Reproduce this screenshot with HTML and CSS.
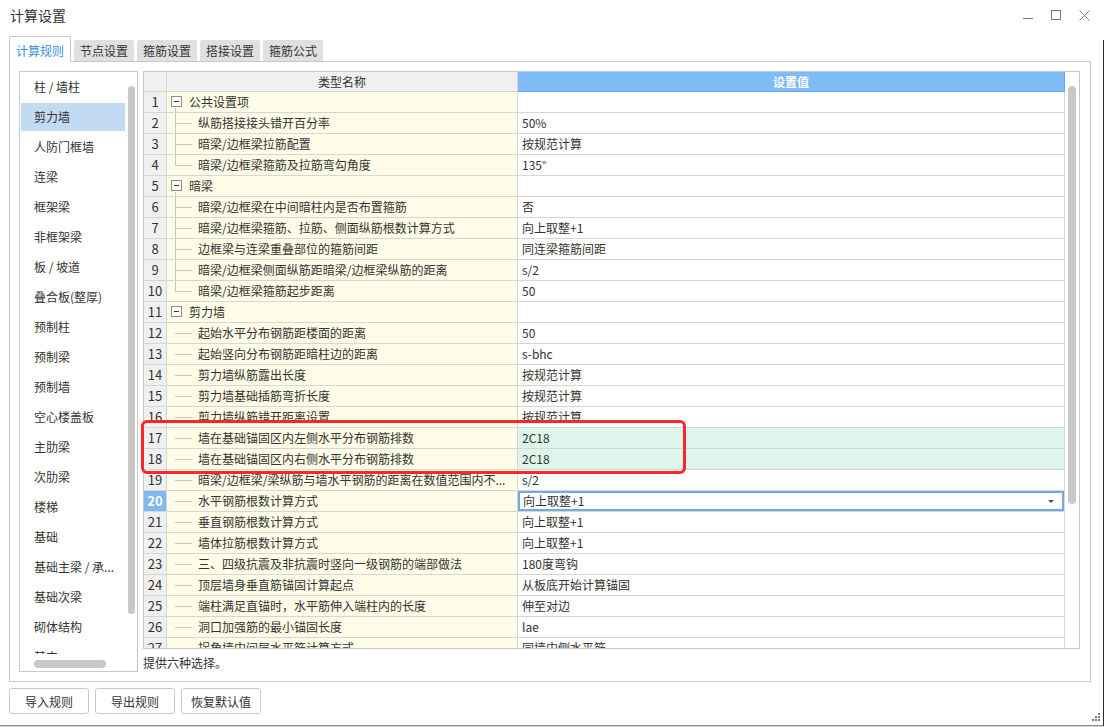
FILE: index.html
```html
<!DOCTYPE html>
<html lang="zh-CN">
<head>
<meta charset="utf-8">
<title>计算设置</title>
<link rel="stylesheet" href="styles.css">
</head>
<body>
<div class="window">
  <div class="titlebar">
    <span class="title">计算设置</span>
    <div class="controls">
      <span class="ctl"><svg width="10" height="10" viewBox="0 0 10 10"><path d="M0 8.5H10" stroke="#7a7a7a" stroke-width="1"/></svg></span>
      <span class="ctl"><svg width="10" height="10" viewBox="0 0 10 10"><rect x="0.5" y="0.5" width="9" height="9" fill="none" stroke="#7a7a7a" stroke-width="1"/></svg></span>
      <span class="ctl"><svg width="11" height="11" viewBox="0 0 11 11"><path d="M0.5 0.5L10.5 10.5M10.5 0.5L0.5 10.5" stroke="#8a8a8a" stroke-width="1"/></svg></span>
    </div>
  </div>

  <div class="tabs">
    <div class="tab active">计算规则</div>
    <div class="tab">节点设置</div>
    <div class="tab">箍筋设置</div>
    <div class="tab">搭接设置</div>
    <div class="tab">箍筋公式</div>
  </div>

  <div class="panel">
    <div class="sidebar">
      <ul class="list">
        <li>柱 / 墙柱</li>
        <li class="sel">剪力墙</li>
        <li>人防门框墙</li>
        <li>连梁</li>
        <li>框架梁</li>
        <li>非框架梁</li>
        <li>板 / 坡道</li>
        <li>叠合板(整厚)</li>
        <li>预制柱</li>
        <li>预制梁</li>
        <li>预制墙</li>
        <li>空心楼盖板</li>
        <li>主肋梁</li>
        <li>次肋梁</li>
        <li>楼梯</li>
        <li>基础</li>
        <li>基础主梁 / 承...</li>
        <li>基础次梁</li>
        <li>砌体结构</li>
        <li>其它</li>
      </ul>
      <div class="vthumb"></div>
      <div class="hthumb"></div>
    </div>

    <div class="main">
      <div class="grid">
        <div class="table">
          <div class="row head">
            <div class="num"></div>
            <div class="name">类型名称</div>
            <div class="val">设置值</div>
          </div>
          <div class="row"><div class="num">1</div><div class="name group"><span class="box"></span>公共设置项</div><div class="val"></div></div>
          <div class="row"><div class="num">2</div><div class="name child tee">纵筋搭接接头错开百分率</div><div class="val">50%</div></div>
          <div class="row"><div class="num">3</div><div class="name child tee">暗梁/边框梁拉筋配置</div><div class="val">按规范计算</div></div>
          <div class="row"><div class="num">4</div><div class="name child last">暗梁/边框梁箍筋及拉筋弯勾角度</div><div class="val">135°</div></div>
          <div class="row"><div class="num">5</div><div class="name group"><span class="box"></span>暗梁</div><div class="val"></div></div>
          <div class="row"><div class="num">6</div><div class="name child tee">暗梁/边框梁在中间暗柱内是否布置箍筋</div><div class="val">否</div></div>
          <div class="row"><div class="num">7</div><div class="name child tee">暗梁/边框梁箍筋、拉筋、侧面纵筋根数计算方式</div><div class="val">向上取整+1</div></div>
          <div class="row"><div class="num">8</div><div class="name child tee">边框梁与连梁重叠部位的箍筋间距</div><div class="val">同连梁箍筋间距</div></div>
          <div class="row"><div class="num">9</div><div class="name child tee">暗梁/边框梁侧面纵筋距暗梁/边框梁纵筋的距离</div><div class="val">s/2</div></div>
          <div class="row"><div class="num">10</div><div class="name child last">暗梁/边框梁箍筋起步距离</div><div class="val">50</div></div>
          <div class="row"><div class="num">11</div><div class="name group open"><span class="box"></span>剪力墙</div><div class="val"></div></div>
          <div class="row"><div class="num">12</div><div class="name child">起始水平分布钢筋距楼面的距离</div><div class="val">50</div></div>
          <div class="row"><div class="num">13</div><div class="name child">起始竖向分布钢筋距暗柱边的距离</div><div class="val">s-bhc</div></div>
          <div class="row"><div class="num">14</div><div class="name child">剪力墙纵筋露出长度</div><div class="val">按规范计算</div></div>
          <div class="row"><div class="num">15</div><div class="name child">剪力墙基础插筋弯折长度</div><div class="val">按规范计算</div></div>
          <div class="row"><div class="num">16</div><div class="name child">剪力墙纵筋错开距离设置</div><div class="val">按规范计算</div></div>
          <div class="row"><div class="num">17</div><div class="name child">墙在基础锚固区内左侧水平分布钢筋排数</div><div class="val mint">2C18</div></div>
          <div class="row"><div class="num">18</div><div class="name child">墙在基础锚固区内右侧水平分布钢筋排数</div><div class="val mint">2C18</div></div>
          <div class="row"><div class="num">19</div><div class="name child">暗梁/边框梁/梁纵筋与墙水平钢筋的距离在数值范围内不...</div><div class="val">s/2</div></div>
          <div class="row current"><div class="num">20</div><div class="name child">水平钢筋根数计算方式</div><div class="val edit">向上取整+1<span class="caret"></span></div></div>
          <div class="row"><div class="num">21</div><div class="name child">垂直钢筋根数计算方式</div><div class="val">向上取整+1</div></div>
          <div class="row"><div class="num">22</div><div class="name child">墙体拉筋根数计算方式</div><div class="val">向上取整+1</div></div>
          <div class="row"><div class="num">23</div><div class="name child">三、四级抗震及非抗震时竖向一级钢筋的端部做法</div><div class="val">180度弯钩</div></div>
          <div class="row"><div class="num">24</div><div class="name child">顶层墙身垂直筋锚固计算起点</div><div class="val">从板底开始计算锚固</div></div>
          <div class="row"><div class="num">25</div><div class="name child">端柱满足直锚时，水平筋伸入端柱内的长度</div><div class="val">伸至对边</div></div>
          <div class="row"><div class="num">26</div><div class="name child">洞口加强筋的最小锚固长度</div><div class="val">lae</div></div>
          <div class="row"><div class="num">27</div><div class="name child">拐角墙中间层水平筋计算方式</div><div class="val">同墙中侧水平筋</div></div>
        </div>
        <div class="vscroll"><div class="thumb"></div></div>
      </div>
      <div class="hint">提供六种选择。</div>
    </div>
  </div>

  <div class="buttons">
    <button class="btn">导入规则</button>
    <button class="btn">导出规则</button>
    <button class="btn">恢复默认值</button>
  </div>

  <svg class="grip" width="8" height="8" viewBox="0 0 8 8">
    <rect x="6" y="0" width="2" height="2" fill="#7a7a7a"/>
    <rect x="3" y="3" width="2" height="2" fill="#7a7a7a"/>
    <rect x="6" y="3" width="2" height="2" fill="#7a7a7a"/>
    <rect x="0" y="6" width="2" height="2" fill="#7a7a7a"/>
    <rect x="3" y="6" width="2" height="2" fill="#7a7a7a"/>
    <rect x="6" y="6" width="2" height="2" fill="#7a7a7a"/>
  </svg>

  <div class="annot"></div>
</div>
</body>
</html>
```

FILE: styles.css
```css
* { box-sizing: border-box; }
html, body { margin: 0; padding: 0; }
body {
  width: 1104px;
  height: 727px;
  overflow: hidden;
  background: #d6d6d6;
  font-family: "Noto Sans CJK SC", "Microsoft YaHei", sans-serif;
  font-size: 12px;
  color: #333;
}
.window {
  position: relative;
  width: 1104px;
  height: 726px;
  background: #fff;
  border-bottom: 1px solid #8c8c8c;
}
.window::before {
  content: "";
  position: absolute;
  right: 0;
  top: 40px;
  bottom: -1px;
  width: 1px;
  background: #2a2a2a;
}

/* title bar */
.titlebar {
  height: 30px;
  display: flex;
  align-items: center;
  padding-left: 10px;
}
.title { font-size: 14px; line-height: 20px; color: #333; }
.controls { margin-left: auto; display: flex; padding-right: 6px; }
.ctl {
  width: 28px;
  height: 30px;
  display: flex;
  align-items: center;
  justify-content: center;
}

/* tabs */
.tabs {
  margin-top: 6px;
  height: 25px;
  padding-left: 9px;
  display: flex;
  align-items: flex-end;
  gap: 3px;
}
.tab {
  width: 60px;
  height: 21px;
  line-height: 21px;
  text-align: center;
  background: #e0e0e0;
  border-radius: 2px 2px 0 0;
  color: #333;
}
.tab.active {
  position: relative;
  z-index: 2;
  width: 62px;
  height: 26px;
  margin-bottom: -1px;
  padding-top: 3px;
  line-height: 22px;
  background: #fff;
  border: 1px solid #c8c8c8;
  border-bottom: none;
  color: #3a8de6;
}

/* panel */
.panel {
  margin-left: 9px;
  width: 1082px;
  height: 621px;
  border: 1px solid #c9c9c9;
  padding: 9px 10px 0 9px;
  display: flex;
  gap: 5px;
}

/* sidebar */
.sidebar {
  position: relative;
  width: 120px;
  height: 601px;
  border: 1px solid #c9c9c9;
  background: #fff;
}
.list {
  list-style: none;
  margin: 0;
  padding: 1px 0 0 1px;
  height: 582px;
  overflow: hidden;
}
.list li {
  width: 104px;
  height: 28px;
  line-height: 28px;
  margin-bottom: 2px;
  padding-left: 13px;
  white-space: nowrap;
  overflow: hidden;
}
.list li.sel { background: #c3dbf2; }
.vthumb {
  position: absolute;
  left: 108px;
  top: 14px;
  width: 7px;
  height: 528px;
  border-radius: 4px;
  background: #c8c8c8;
}
.hthumb {
  position: absolute;
  left: 14px;
  top: 588px;
  width: 72px;
  height: 8px;
  border-radius: 4px;
  background: #c8c8c8;
}

/* main */
.main { width: 937px; display: flex; flex-direction: column; }
.grid {
  width: 937px;
  height: 578px;
  border: 1px solid #c8c8c8;
  display: flex;
  overflow: hidden;
}
.table { width: 921px; flex: none; }
.row { display: flex; height: 21px; }
.row > div {
  height: 21px;
  border-right: 1px solid #d6d6d6;
  border-bottom: 1px solid #d6d6d6;
  line-height: 20px;
  white-space: nowrap;
  overflow: hidden;
}
.num {
  width: 23px;
  flex: none;
  text-align: center;
  background: #f0f0f0;
  font-size: 13px;
}
.name {
  position: relative;
  width: 351px;
  flex: none;
  background: #fffce7;
}
.val {
  position: relative;
  width: 547px;
  flex: none;
  padding-left: 4px;
  background: #fff;
}
.val.mint { background: #ddf5ea; }

.row.head { height: 20px; }
.row.head > div { height: 20px; line-height: 19px; }
.row.head .name { background: #f0f0f0; text-align: center; }
.row.head .val {
  background: #7fbbf6;
  border-bottom-color: #6aa7ea;
  border-right-color: #6aa7ea;
  color: #fff;
  font-weight: bold;
  text-align: center;
  padding-left: 0;
}

/* tree */
.name.group { padding-left: 22px; }
.name.group::after {
  content: "";
  position: absolute;
  left: 8px;
  top: 16px;
  bottom: -1px;
  width: 1px;
  background: #c6c6c6;
}
.name.group.open::after { display: none; }
.box {
  position: absolute;
  left: 4px;
  top: 4px;
  width: 11px;
  height: 11px;
  border: 1px solid #8e8e8e;
  background: #fff;
}
.box::after {
  content: "";
  position: absolute;
  left: 2px;
  top: 4px;
  width: 5px;
  height: 1px;
  background: #333;
}
.name.child { padding-left: 31px; }
.name.child::before {
  content: "";
  position: absolute;
  left: 8px;
  top: 10px;
  width: 17px;
  height: 1px;
  background: #c6c6c6;
}
.name.tee::after,
.name.last::after {
  content: "";
  position: absolute;
  left: 8px;
  top: 0;
  width: 1px;
  background: #c6c6c6;
}
.name.tee::after { bottom: -1px; }
.name.last::after { height: 11px; }

/* current row */
.row.current .num {
  background: #80b8f2;
  color: #fff;
  font-weight: bold;
}
.val.edit { box-shadow: inset 0 0 0 2px #6ea9e8; padding-left: 5px; }
.caret {
  position: absolute;
  right: 10px;
  top: 9px;
  width: 0;
  height: 0;
  border-left: 3px solid transparent;
  border-right: 3px solid transparent;
  border-top: 3px solid #555;
}

/* grid scrollbar */
.vscroll { position: relative; flex: 1; }
.vscroll .thumb {
  position: absolute;
  left: 3px;
  top: 14px;
  width: 8px;
  height: 418px;
  border-radius: 4px;
  background: #c8c8c8;
}

.hint { padding-top: 6px; line-height: 16px; }

/* buttons */
.buttons {
  margin-top: 6px;
  padding-left: 9px;
  display: flex;
  gap: 6px;
}
.btn {
  width: 80px;
  height: 26px;
  border: 1px solid #c9c9c9;
  border-radius: 3px;
  background: #fff;
  font-family: inherit;
  font-size: 12px;
  color: #333;
  padding: 0;
}

.grip { position: absolute; right: 4px; bottom: 4px; }

.annot {
  position: absolute;
  left: 141px;
  top: 420px;
  width: 545px;
  height: 54px;
  border: 3px solid #ff2626;
  border-radius: 6px;
}
```
